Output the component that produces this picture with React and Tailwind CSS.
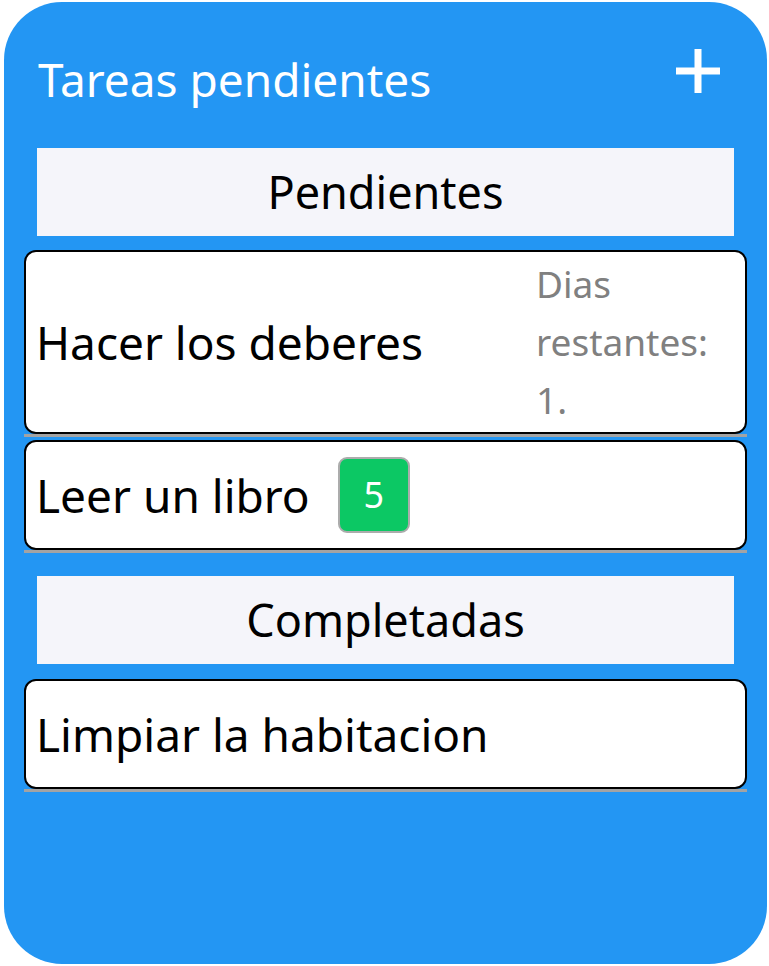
import React from 'react';

const tasks = [
  { id: 1, title: 'Hacer los deberes', note: 'Dias restantes: 1.' },
  { id: 2, title: 'Leer un libro', badge: 5 },
];

const done = [{ id: 3, title: 'Limpiar la habitacion' }];

const SectionHeader = ({ children, className = '' }) => (
  <div className={`mx-[13px] flex h-[88px] items-center justify-center bg-[#f5f5fa] text-[45px] text-black ${className}`}>
    {children}
  </div>
);

const TaskCard = ({ task, tall, className = '' }) => (
  <div className={`border-b-[3px] border-[#a3a3a3] ${className}`}>
    <div
      className={`flex items-center justify-between rounded-[12px] border-2 border-black bg-white pl-[10px] ${
        tall ? 'h-[184px]' : 'h-[110px]'
      }`}
    >
      <div className="flex items-center">
        <span className="text-[46px] leading-none text-black">{task.title}</span>
        {task.badge && (
          <span className="ml-[28px] flex h-[76px] w-[72px] items-center justify-center rounded-[9px] border-2 border-[#acacac] bg-[#0cc864] text-[36px] text-white">
            {task.badge}
          </span>
        )}
      </div>
      {task.note && (
        <div className="w-[209px] pr-[10px] text-[37px] leading-[58px] text-[#808080]">
          {task.note}
        </div>
      )}
    </div>
  </div>
);

export default function App() {
  return (
    <div
      className="min-h-screen bg-white pl-[4px] pr-[2px] pt-[2px]"
      style={{ fontFamily: '"Noto Sans", sans-serif' }}
    >
      <div className="h-[962px] w-[763px] rounded-[58px] bg-[#2396f3] px-5 pt-[46px]">
        {/* Cabecera */}
        <div className="flex items-start justify-between pl-[14px] pr-[27px]">
          <h1 className="text-[46px] leading-[63px] text-white">Tareas pendientes</h1>
          <svg className="mt-[1px]" width="44" height="44" viewBox="0 0 44 44">
            <path d="M22 0V44M0 22H44" stroke="white" strokeWidth="7" />
          </svg>
        </div>

        {/* Pendientes */}
        <SectionHeader className="mt-[37px]">Pendientes</SectionHeader>
        <TaskCard task={tasks[0]} tall className="mt-[14px]" />
        <TaskCard task={tasks[1]} className="mt-[3px]" />

        {/* Completadas */}
        <SectionHeader className="mt-[23px]">Completadas</SectionHeader>
        {done.map((t) => (
          <TaskCard key={t.id} task={t} className="mt-[15px]" />
        ))}
      </div>
    </div>
  );
}
